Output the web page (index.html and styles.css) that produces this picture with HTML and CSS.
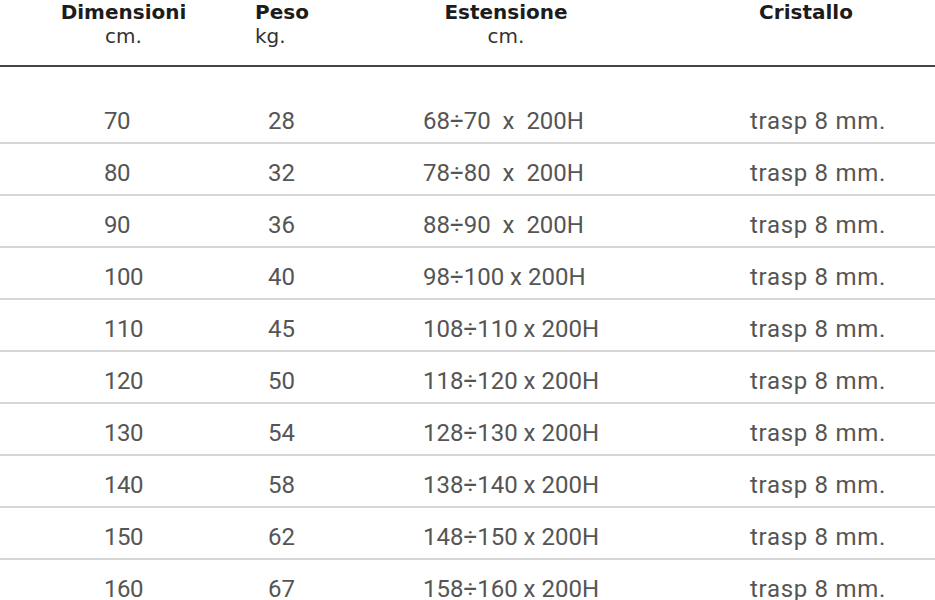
FILE: index.html
```html
<!DOCTYPE html>
<html lang="it">
<head>
<meta charset="utf-8">
<title>Tabella misure</title>
<link rel="stylesheet" href="styles.css">
</head>
<body>
<table class="spec">
  <colgroup>
    <col class="c1"><col class="c2"><col class="c3"><col class="c4">
  </colgroup>
  <thead>
    <tr>
      <th class="h1">Dimensioni<span class="unit">cm.</span></th>
      <th class="h2">Peso<span class="unit">kg.</span></th>
      <th class="h3">Estensione<span class="unit">cm.</span></th>
      <th class="h4">Cristallo</th>
    </tr>
  </thead>
  <tbody>
    <tr class="first"><td class="d1">70</td><td class="d2">28</td><td class="d3">68÷70  x  200H</td><td class="d4">trasp 8 mm.</td></tr>
    <tr><td class="d1">80</td><td class="d2">32</td><td class="d3">78÷80  x  200H</td><td class="d4">trasp 8 mm.</td></tr>
    <tr><td class="d1">90</td><td class="d2">36</td><td class="d3">88÷90  x  200H</td><td class="d4">trasp 8 mm.</td></tr>
    <tr><td class="d1">100</td><td class="d2">40</td><td class="d3">98÷100 x 200H</td><td class="d4">trasp 8 mm.</td></tr>
    <tr><td class="d1">110</td><td class="d2">45</td><td class="d3">108÷110 x 200H</td><td class="d4">trasp 8 mm.</td></tr>
    <tr><td class="d1">120</td><td class="d2">50</td><td class="d3">118÷120 x 200H</td><td class="d4">trasp 8 mm.</td></tr>
    <tr><td class="d1">130</td><td class="d2">54</td><td class="d3">128÷130 x 200H</td><td class="d4">trasp 8 mm.</td></tr>
    <tr><td class="d1">140</td><td class="d2">58</td><td class="d3">138÷140 x 200H</td><td class="d4">trasp 8 mm.</td></tr>
    <tr><td class="d1">150</td><td class="d2">62</td><td class="d3">148÷150 x 200H</td><td class="d4">trasp 8 mm.</td></tr>
    <tr><td class="d1">160</td><td class="d2">67</td><td class="d3">158÷160 x 200H</td><td class="d4">trasp 8 mm.</td></tr>
  </tbody>
</table>
</body>
</html>
```

FILE: styles.css
```css
html, body {
  margin: 0;
  padding: 0;
  background: #fff;
}

.spec {
  width: 935px;
  table-layout: fixed;
  border-collapse: collapse;
  border-spacing: 0;
}

.c1 { width: 247px; }
.c2 { width: 168px; }
.c3 { width: 182px; }
.c4 { width: 338px; }

.spec th {
  height: 65px;
  padding: 0;
  vertical-align: top;
  font-family: "DejaVu Sans", sans-serif;
  font-weight: bold;
  font-size: 20px;
  line-height: 24px;
  color: #1c1c1c;
  border-bottom: 2px solid #454545;
}

.spec .unit {
  display: block;
  font-weight: normal;
  color: #333;
}

.h1 { text-align: center; }
.h2 { text-align: left; padding-left: 8px !important; }
.h3 { text-align: center; }
.h4 { text-align: center; padding-left: 80px !important; }

.spec td {
  padding: 8px 0 0 0;
  height: 42px;
  line-height: 42px;
  vertical-align: top;
  font-family: Roboto, "Liberation Sans", sans-serif;
  font-size: 24px;
  font-weight: 400;
  color: #555;
  white-space: pre;
  border-bottom: 2px solid #d6d6d6;
}

.spec tr.first td {
  padding-top: 33px;
}

.d1 { padding-left: 104px !important; letter-spacing: -0.5px; }
.d2 { padding-left: 21px !important; }
.d3 { padding-left: 8px !important; }
.d4 { padding-left: 153px !important; letter-spacing: 0.7px; }
```
